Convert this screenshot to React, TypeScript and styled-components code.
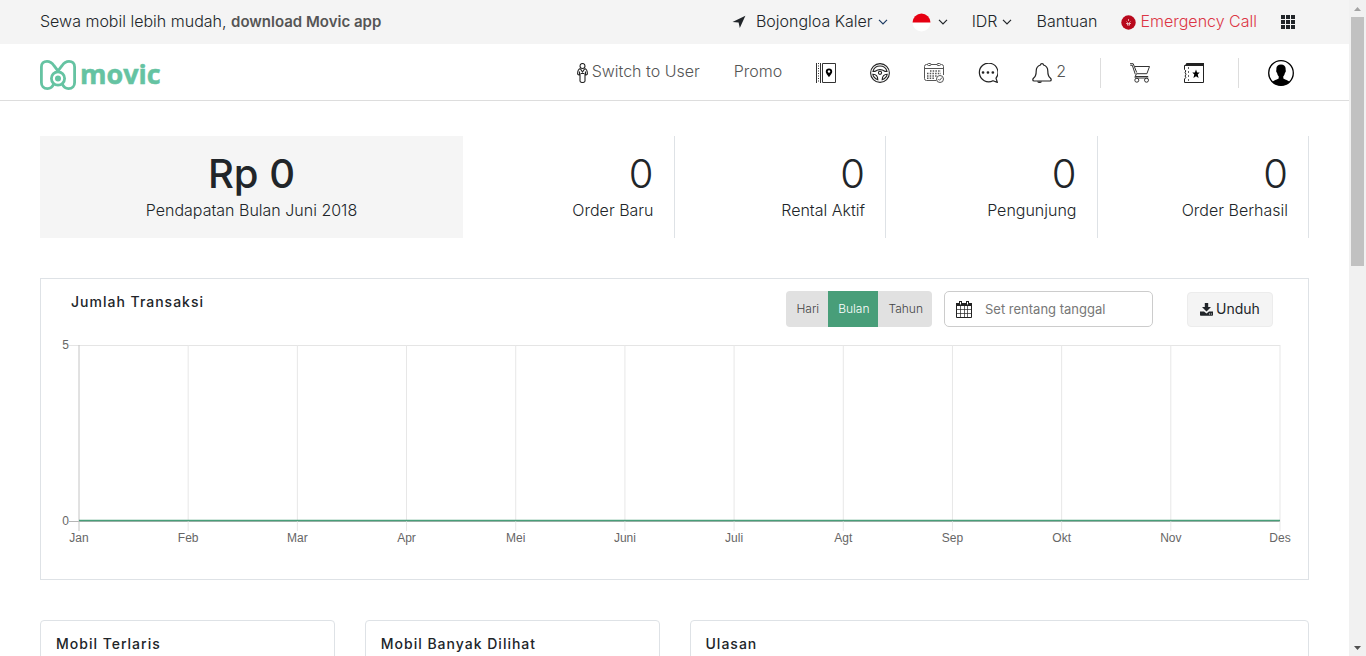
import React from 'react';
import styled, { createGlobalStyle } from 'styled-components';

const GlobalStyle = createGlobalStyle`
  *, *::before, *::after { box-sizing: border-box; }
  body {
    margin: 0;
    background: #fff;
    color: #212529;
    font-family: Inter, Roboto, sans-serif;
    font-size: 16px;
    font-weight: 300;
    line-height: 24px;
  }
  button, input { font: inherit; color: inherit; }
  a { color: inherit; text-decoration: none; }
  svg { display: block; flex: none; }
`;

const Shell = styled.div`
  display: flex;
  height: 100vh;
  overflow: hidden;
`;

const Page = styled.div`
  flex: 1;
  min-width: 0;
`;

const Scrollbar = styled.div`
  display: flex;
  flex-direction: column;
  justify-content: space-between;
  width: 17px;
  background: #f1f1f1;
`;

const ScrollArrow = styled.div`
  display: grid;
  place-items: center;
  height: 17px;
`;

const ScrollTrack = styled.div`
  flex: 1;
  padding: 0 2px;
`;

const ScrollThumb = styled.div`
  height: 40%;
  background: #c1c1c1;
`;

const TopBar = styled.div`
  display: flex;
  align-items: center;
  justify-content: space-between;
  height: 44px;
  padding: 0 54px 0 40px;
  background: #f4f4f4;
  white-space: nowrap;
`;

const TopText = styled.span`
  padding-bottom: 2px;
`;

const AppLink = styled.a`
  color: #555;
  font-size: 15px;
  font-weight: 600;
`;

const TopMenu = styled.nav`
  display: flex;
  align-items: center;
  gap: 24px;
`;

const MenuButton = styled.button<{ $gap?: number }>`
  display: flex;
  align-items: center;
  gap: ${(p) => p.$gap ?? 5}px;
  padding: 0;
  border: 0;
  background: none;
`;

const TopLink = styled.a<{ $danger?: boolean }>`
  display: flex;
  align-items: center;
  gap: 4px;
  color: ${(p) => (p.$danger ? '#dc3545' : 'inherit')};
`;

const Header = styled.header`
  display: flex;
  align-items: center;
  justify-content: space-between;
  height: 57px;
  padding: 2px 55px 0 40px;
  border-bottom: 1px solid #ddd;
  color: #555;
  white-space: nowrap;
`;

const LogoLink = styled.a`
  padding-top: 4px;
`;

const HeaderNav = styled.nav`
  display: flex;
  align-items: center;
  gap: 34px;
`;

const HeaderLink = styled.a`
  display: flex;
  align-items: center;
  gap: 4px;
`;

const HeaderText = styled.span`
  padding-bottom: 4px;
`;

const HeaderGroup = styled.div`
  display: flex;
  gap: 34px;
  align-items: center;
  padding: 5px 34px 5px 29px;
  border-left: 1px solid #ddd;
  border-right: 1px solid #ddd;
  margin-right: -5px;
`;

const Content = styled.main`
  padding: 35px 40px 0;
`;

const Stats = styled.section`
  display: grid;
  grid-template-columns: 2fr repeat(4, 1fr);
  height: 102px;
`;

const Stat = styled.div<{ $main?: boolean }>`
  padding: 14px 20px 0;
  background: ${(p) => (p.$main ? '#f5f5f5' : 'none')};
  border-right: ${(p) => (p.$main ? '0' : '1px solid #dee2e6')};
  text-align: ${(p) => (p.$main ? 'center' : 'right')};
`;

const StatValue = styled.div<{ $main?: boolean }>`
  font-size: 40px;
  line-height: 48px;
  font-weight: ${(p) => (p.$main ? 500 : 300)};
`;

const Panel = styled.section`
  height: 302px;
  margin-top: 40px;
  border: 1px solid #dee2e6;
`;

const PanelHead = styled.div`
  display: flex;
  align-items: center;
  padding: 12px 35px 0 30px;
`;

const Title = styled.h2`
  flex: 1;
  margin: 0;
  font-size: 14px;
  line-height: 21px;
  font-weight: 500;
  letter-spacing: 1px;
  white-space: nowrap;
`;

const PanelTitle = styled(Title)`
  align-self: flex-start;
`;

const Toggle = styled.div`
  display: flex;
  height: 36px;
  border-radius: 4px;
  overflow: hidden;
`;

const ToggleButton = styled.button<{ $active?: boolean }>`
  padding: 0 9px 0 10px;
  border: 0;
  background: ${(p) => (p.$active ? '#489e79' : '#e1e1e1')};
  color: ${(p) => (p.$active ? '#fff' : '#444')};
  font-size: 12px;
`;

const DateField = styled.label`
  display: flex;
  align-items: center;
  gap: 13px;
  width: 209px;
  height: 36px;
  margin: 0 34px 0 12px;
  padding: 0 11px;
  border: 1px solid #ccc;
  border-radius: 5px;
`;

const DateInput = styled.input`
  width: 100%;
  min-width: 0;
  padding: 0;
  border: 0;
  outline: 0;
  background: none;
  font-size: 13px;
  font-weight: 400;
  &::placeholder { color: #777; opacity: 1; }
`;

const DownloadButton = styled.button`
  display: flex;
  align-items: center;
  justify-content: center;
  gap: 3px;
  width: 86px;
  height: 35px;
  padding: 0;
  border: 1px solid #ececec;
  border-radius: 4px;
  background: #f4f4f4;
  font-size: 14px;
  font-weight: 400;
`;

const ChartArea = styled.div`
  padding: 18px 28px 0 38px;
`;

const ChartSvg = styled.svg`
  width: 100%;
  height: 205px;
  overflow: visible;
  font-family: 'Liberation Sans', Arial, sans-serif;
  font-size: 12px;
  font-weight: 400;
  fill: #666;
`;

const Cards = styled.section`
  display: grid;
  grid-template-columns: repeat(4, 1fr);
  gap: 30px;
  margin-top: 40px;
`;

const Card = styled.article<{ $wide?: boolean }>`
  grid-column: span ${(p) => (p.$wide ? 2 : 1)};
  min-height: 300px;
  padding: 12px 15px;
  border: 1px solid #dee2e6;
  border-radius: 4px;
`;

const Chevron = ({ color = '#212529' }: { color?: string }) => (
  <svg width="10" height="6" viewBox="0 0 10 6" fill="none" stroke={color} strokeWidth="1.2">
    <path d="M1 .8 5 4.8 9 .8" />
  </svg>
);

const LocationIcon = () => (
  <svg width="14" height="14" viewBox="0 0 14 14" fill="#212529">
    <path d="M13.4.8 7.8 13 6.6 7.6.5 7Z" />
  </svg>
);

const FlagIcon = () => (
  <svg width="19" height="19" viewBox="0 0 19 19">
    <circle cx="9.5" cy="9.5" r="9" fill="#fff" />
    <path d="M.5 9.5a9 9 0 0 1 18 0Z" fill="#e60012" />
  </svg>
);

const EmergencyIcon = () => (
  <svg width="15" height="15" viewBox="0 0 15 15">
    <circle cx="7.5" cy="7.5" r="7.2" fill="#b8081c" />
    <path d="M7.5 4v2M5.5 6.5l1 1M9.500 6.500l-1 1M5 8.500h5M6 10h3M6.500 7.500v2.500M8.500 7.500v2.500" stroke="#f3c9cd" strokeWidth=".8" />
  </svg>
);

const GridIcon = () => (
  <svg width="14" height="14" viewBox="0 0 14 14" fill="#212529">
    {[0, 5, 10].map((y) => [0, 5, 10].map((x) => <rect key={`${x}-${y}`} x={x} y={y} width="4" height="4" />))}
  </svg>
);

const Logo = () => (
  <svg width="128" height="32" viewBox="0 0 128 32" role="img" aria-label="movic">
    <g fill="none" stroke="#65c3a2" strokeWidth="2.8">
      <path d="M14 24.5C12.500 28 10.500 29.600 7.500 29.600 3.500 29.600 1.400 27 1.400 23.500V8C1.400 4 3.500 2.400 7 2.400c3 0 5 1.300 7 4.300l9 12" />
      <path d="M22 24.500c1.500 3.500 3.500 5.100 6.500 5.100 4 0 6.100-2.600 6.100-6.100V8c0-4-2.100-5.600-5.600-5.600-3 0-5 1.300-7 4.300L13 18.500" />
      <circle cx="18" cy="19.500" r="6.600" fill="#fff" />
    </g>
    <circle cx="18" cy="19.500" r="3" fill="#65c3a2" />
    <text x="40" y="25" fill="#65c3a2" stroke="#65c3a2" strokeWidth=".5" fontFamily="'Open Sans', 'Noto Sans', sans-serif" fontSize="27" fontWeight="700">movic</text>
  </svg>
);

const PersonIcon = () => (
  <svg width="11" height="20" viewBox="0 0 11 20" fill="none" stroke="#222" strokeWidth="1.100">
    <circle cx="5.500" cy="3" r="2.500" />
    <path d="M3.500 5.500C1 6 .7 8 .6 10.500c0 1.500 1.500 1.800 2.400.8V18c0 2 5 2 5 0v-6.700c.9 1 2.400.7 2.400-.8C10.300 8 10 6 7.500 5.500M3.500 6l2 3 2-3M2.500 8.500v3M8.500 8.500v3M4 10.500h3" />
  </svg>
);

const MapBookIcon = () => (
  <svg width="20" height="20" viewBox="0 0 20 20" fill="none" stroke="#333">
    <path d="M.5 0v20M4.500 0v20M6.500.5h13v19h-13z" />
    <path d="M2.500 0v20" strokeDasharray="1 1.500" />
    <path d="M13 5.500a3.200 3.200 0 0 0-3.200 3.200c0 1.800 3.200 5.300 3.200 5.300s3.200-3.500 3.200-5.300A3.200 3.200 0 0 0 13 5.500Z" fill="#000" stroke="none" />
    <circle cx="13" cy="8.500" r="1.200" fill="#fff" stroke="none" />
  </svg>
);

const WheelIcon = () => (
  <svg width="20" height="20" viewBox="0 0 20 20" fill="none" stroke="#222" strokeWidth="1.100">
    <circle cx="10" cy="10" r="9.400" />
    <path d="M3 8.500a7.200 7.200 0 0 1 14 0c-2.500.3-3-.9-4.800-1.500a7 7 0 0 0-4.400 0C6 7.600 5.500 8.800 3 8.500ZM2.800 11.200c3 0 5 2 5 5.500C5 15.700 3.200 13.800 2.800 11.200ZM17.200 11.200c-3 0-5 2-5 5.500 2.800-1 4.600-2.900 5-5.500Z" />
    <circle cx="10" cy="9.800" r="1.600" />
  </svg>
);

const CalendarCheckIcon = () => (
  <svg width="20" height="20" viewBox="0 0 20 20" fill="none" stroke="#555" strokeWidth="1">
    <path d="M12.500 17.500H2.500q-2 0-2-2v-12q0-2 2-2h1M7 1.500h6M17 1.500h.5q2 0 2 2V12M.5 5.500h19" />
    <rect x="3.500" y=".5" width="3.500" height="2" rx="1" />
    <rect x="13" y=".5" width="3.500" height="2" rx="1" />
    <path d="M6 8h11M3 10.500h14M3 13h10M3 15.300h7" strokeDasharray="1.500 1.200" strokeWidth="1.600" />
    <circle cx="16" cy="16" r="3.500" fill="#fff" />
    <path d="m14.300 16 1.300 1.300 2.400-2.800" />
  </svg>
);

const ChatIcon = () => (
  <svg width="20" height="20" viewBox="0 0 20 20" fill="none" stroke="#222" strokeWidth="1.200">
    <path d="M19.400 19.400 18 15.200A9.300 9.300 0 1 0 15 17.700Z" strokeLinejoin="round" />
    <path d="M5 9.500h.1M9.900 9.500h.1M14.800 9.500h.1" strokeWidth="2.600" strokeLinecap="round" />
  </svg>
);

const BellIcon = () => (
  <svg width="20" height="20" viewBox="0 0 20 20" fill="none" stroke="#222" strokeWidth="1.200">
    <path d="M10 .6c-1 0-1.500.5-1.600 1.400C5.500 3 4.200 5.200 4.200 8c0 4-.7 5.700-2.500 7-1.200 1-1.400 3 .5 3h15.600c1.900 0 1.700-2 .5-3-1.800-1.300-2.500-3-2.500-7 0-2.800-1.300-5-4.200-6C11.500 1.100 11 .6 10 .6Z" />
    <path d="M5 18.500h5q-.5 1.500-2.400 1.500T5 18.500Z" fill="#222" stroke="none" />
  </svg>
);

const CartIcon = () => (
  <svg width="20" height="20" viewBox="0 0 20 20" fill="none" stroke="#333" strokeWidth="1">
    <path d="M0 .7h3.200L4.300 3.500h15.200l-2.600 7.200H6.500L5.200 13.500h13M.3 2.300h2l3 9M6.700 9.500 4.400 3.700M5.200 13.500q-.8 1.300.6 1.500h12.500" />
    <circle cx="6.800" cy="17.200" r="2" />
    <circle cx="16.500" cy="17.200" r="2" />
  </svg>
);

const TicketIcon = () => (
  <svg width="20" height="20" viewBox="0 0 20 20" fill="none" stroke="#222" strokeWidth="1">
    <path d="M2.500 0h17.500v3H.5Z" fill="#222" stroke="none" />
    <path d="M.5 2.500v4q2.300 1.200.6 3 1.800 1.800 0 3.500 1.700 1.700-.6 3v3.500h19V2.500Z" />
    <path d="M4.500 4v15" strokeDasharray="2 2" strokeWidth=".7" />
    <path d="m12 6.500 1.100 2.900h2.600L13.700 11.500l.9 3.500-2.600-1.800L9.400 15l.9-3.500-2-2.100h2.600Z" fill="#000" stroke="none" />
  </svg>
);

const AvatarIcon = () => (
  <svg width="26" height="26" viewBox="0 0 26 26">
    <circle cx="13" cy="13" r="12.300" fill="#fff" stroke="#000" strokeWidth="1.300" />
    <path d="M13 4.500c-3.300 0-5 2-4.600 5.500-.6.800 0 2.500.7 3 .3 1.700.8 2.500 1.600 3.300v2c-.6 1.300-4.700 1.500-6.300 3.700a12.300 12.300 0 0 0 17.200 0c-1.600-2.200-5.700-2.400-6.300-3.700v-2c.8-.8 1.300-1.600 1.600-3.300.7-.5 1.300-2.200.7-3 .4-3.500-1.300-5.500-4.600-5.500Z" />
  </svg>
);

const CalendarIcon = () => (
  <svg width="16" height="17" viewBox="0 0 16 17" fill="none" stroke="#222">
    <path d="M.5 4.500h15v12H.5z" />
    <path d="M0 2h16v3H0z" fill="#222" stroke="none" />
    <path d="M4.500 0v4M11.500 0v4" strokeWidth="3" />
    <path d="M4.500 1v2.500M11.500 1v2.500" stroke="#fff" />
    <path d="M4.500 5v11M8.500 5v11M11.500 5v11M1 8.500h14M1 12.500h14" strokeWidth=".7" />
  </svg>
);

const DownloadIcon = () => (
  <svg width="13" height="13" viewBox="0 0 13 13" fill="#212529">
    <path d="M4.800 0h3.400v4H11L6.500 8.500 2 4h2.800Z" />
    <path d="M0 8.500h4l2.500 2 2.500-2h4V12q0 .8-.8.800H.8Q0 12.800 0 12Z" />
    <path d="M9 11h.9M10.900 11h.9" stroke="#f4f4f4" />
  </svg>
);

const MONTHS = ['Jan', 'Feb', 'Mar', 'Apr', 'Mei', 'Juni', 'Juli', 'Agt', 'Sep', 'Okt', 'Nov', 'Des'];

const TransactionChart = () => (
  <ChartSvg role="img" aria-label="Jumlah Transaksi">
    <line x1="-10" x2="100%" y1="0.5" y2="0.5" stroke="#e5e5e5" />
    <line x1="-10" x2="100%" y1="176.5" y2="176.5" stroke="#b5b5b5" />
    {MONTHS.map((month, i) => {
      const x = `${(i * 100) / (MONTHS.length - 1)}%`;
      return (
        <g key={month}>
          <line x1={x} x2={x} y1="0" y2="186" stroke={i === 0 ? '#c4c4c4' : '#e7e7e7'} />
          <text x={x} y="197" textAnchor="middle">{month}</text>
        </g>
      );
    })}
    <line x1="0" x2="100%" y1="175.5" y2="175.5" stroke="#489e79" strokeWidth="1.5" />
    <text x="-10" y="4" textAnchor="end">5</text>
    <text x="-10" y="180" textAnchor="end">0</text>
  </ChartSvg>
);

const STATS = [
  { label: 'Pendapatan Bulan Juni 2018', value: 'Rp 0', main: true },
  { label: 'Order Baru', value: '0' },
  { label: 'Rental Aktif', value: '0' },
  { label: 'Pengunjung', value: '0' },
  { label: 'Order Berhasil', value: '0' },
];

export default function App() {
  return (
    <>
      <GlobalStyle />
      <Shell>
        <Page>
          <TopBar>
            <TopText>Sewa mobil lebih mudah, <AppLink href="#app">download Movic app</AppLink></TopText>
            <TopMenu>
              <MenuButton>
                <LocationIcon />
                <TopText>&nbsp;Bojongloa Kaler</TopText>
                <Chevron color="#1d3b63" />
              </MenuButton>
              <MenuButton $gap={7} aria-label="Bahasa"><FlagIcon /><Chevron /></MenuButton>
              <MenuButton><TopText>IDR</TopText><Chevron /></MenuButton>
              <TopLink href="#bantuan"><TopText>Bantuan</TopText></TopLink>
              <TopLink href="#emergency" $danger><EmergencyIcon /><TopText>Emergency Call</TopText></TopLink>
              <MenuButton aria-label="Menu"><GridIcon /></MenuButton>
            </TopMenu>
          </TopBar>
          <Header>
            <LogoLink href="#home"><Logo /></LogoLink>
            <HeaderNav>
              <HeaderLink href="#switch"><PersonIcon /><HeaderText>Switch to User</HeaderText></HeaderLink>
              <HeaderLink href="#promo"><HeaderText>Promo</HeaderText></HeaderLink>
              <HeaderLink href="#map" aria-label="Peta"><MapBookIcon /></HeaderLink>
              <HeaderLink href="#drive" aria-label="Mobil"><WheelIcon /></HeaderLink>
              <HeaderLink href="#booking" aria-label="Pesanan"><CalendarCheckIcon /></HeaderLink>
              <HeaderLink href="#chat" aria-label="Pesan"><ChatIcon /></HeaderLink>
              <HeaderLink href="#notif"><BellIcon /><HeaderText>2</HeaderText></HeaderLink>
              <HeaderGroup>
                <HeaderLink href="#cart" aria-label="Keranjang"><CartIcon /></HeaderLink>
                <HeaderLink href="#voucher" aria-label="Voucher"><TicketIcon /></HeaderLink>
              </HeaderGroup>
              <HeaderLink href="#profile" aria-label="Profil"><AvatarIcon /></HeaderLink>
            </HeaderNav>
          </Header>
          <Content>
            <Stats>
              {STATS.map((s) => (
                <Stat key={s.label} $main={s.main}>
                  <StatValue $main={s.main}>{s.value}</StatValue>
                  {s.label}
                </Stat>
              ))}
            </Stats>
            <Panel>
              <PanelHead>
                <PanelTitle>Jumlah Transaksi</PanelTitle>
                <Toggle>
                  <ToggleButton>Hari</ToggleButton>
                  <ToggleButton $active>Bulan</ToggleButton>
                  <ToggleButton>Tahun</ToggleButton>
                </Toggle>
                <DateField>
                  <CalendarIcon />
                  <DateInput type="text" placeholder="Set rentang tanggal" aria-label="Set rentang tanggal" />
                </DateField>
                <DownloadButton><DownloadIcon />Unduh</DownloadButton>
              </PanelHead>
              <ChartArea><TransactionChart /></ChartArea>
            </Panel>
            <Cards>
              <Card><Title>Mobil Terlaris</Title></Card>
              <Card><Title>Mobil Banyak Dilihat</Title></Card>
              <Card $wide><Title>Ulasan</Title></Card>
            </Cards>
          </Content>
        </Page>
        <Scrollbar aria-hidden="true">
          <ScrollArrow>
            <svg width="7" height="4" viewBox="0 0 7 4" fill="#a3a3a3"><path d="M0 4 3.5 0 7 4Z" /></svg>
          </ScrollArrow>
          <ScrollTrack><ScrollThumb /></ScrollTrack>
          <ScrollArrow>
            <svg width="7" height="4" viewBox="0 0 7 4" fill="#505050"><path d="M0 0 3.5 4 7 0Z" /></svg>
          </ScrollArrow>
        </Scrollbar>
      </Shell>
    </>
  );
}
